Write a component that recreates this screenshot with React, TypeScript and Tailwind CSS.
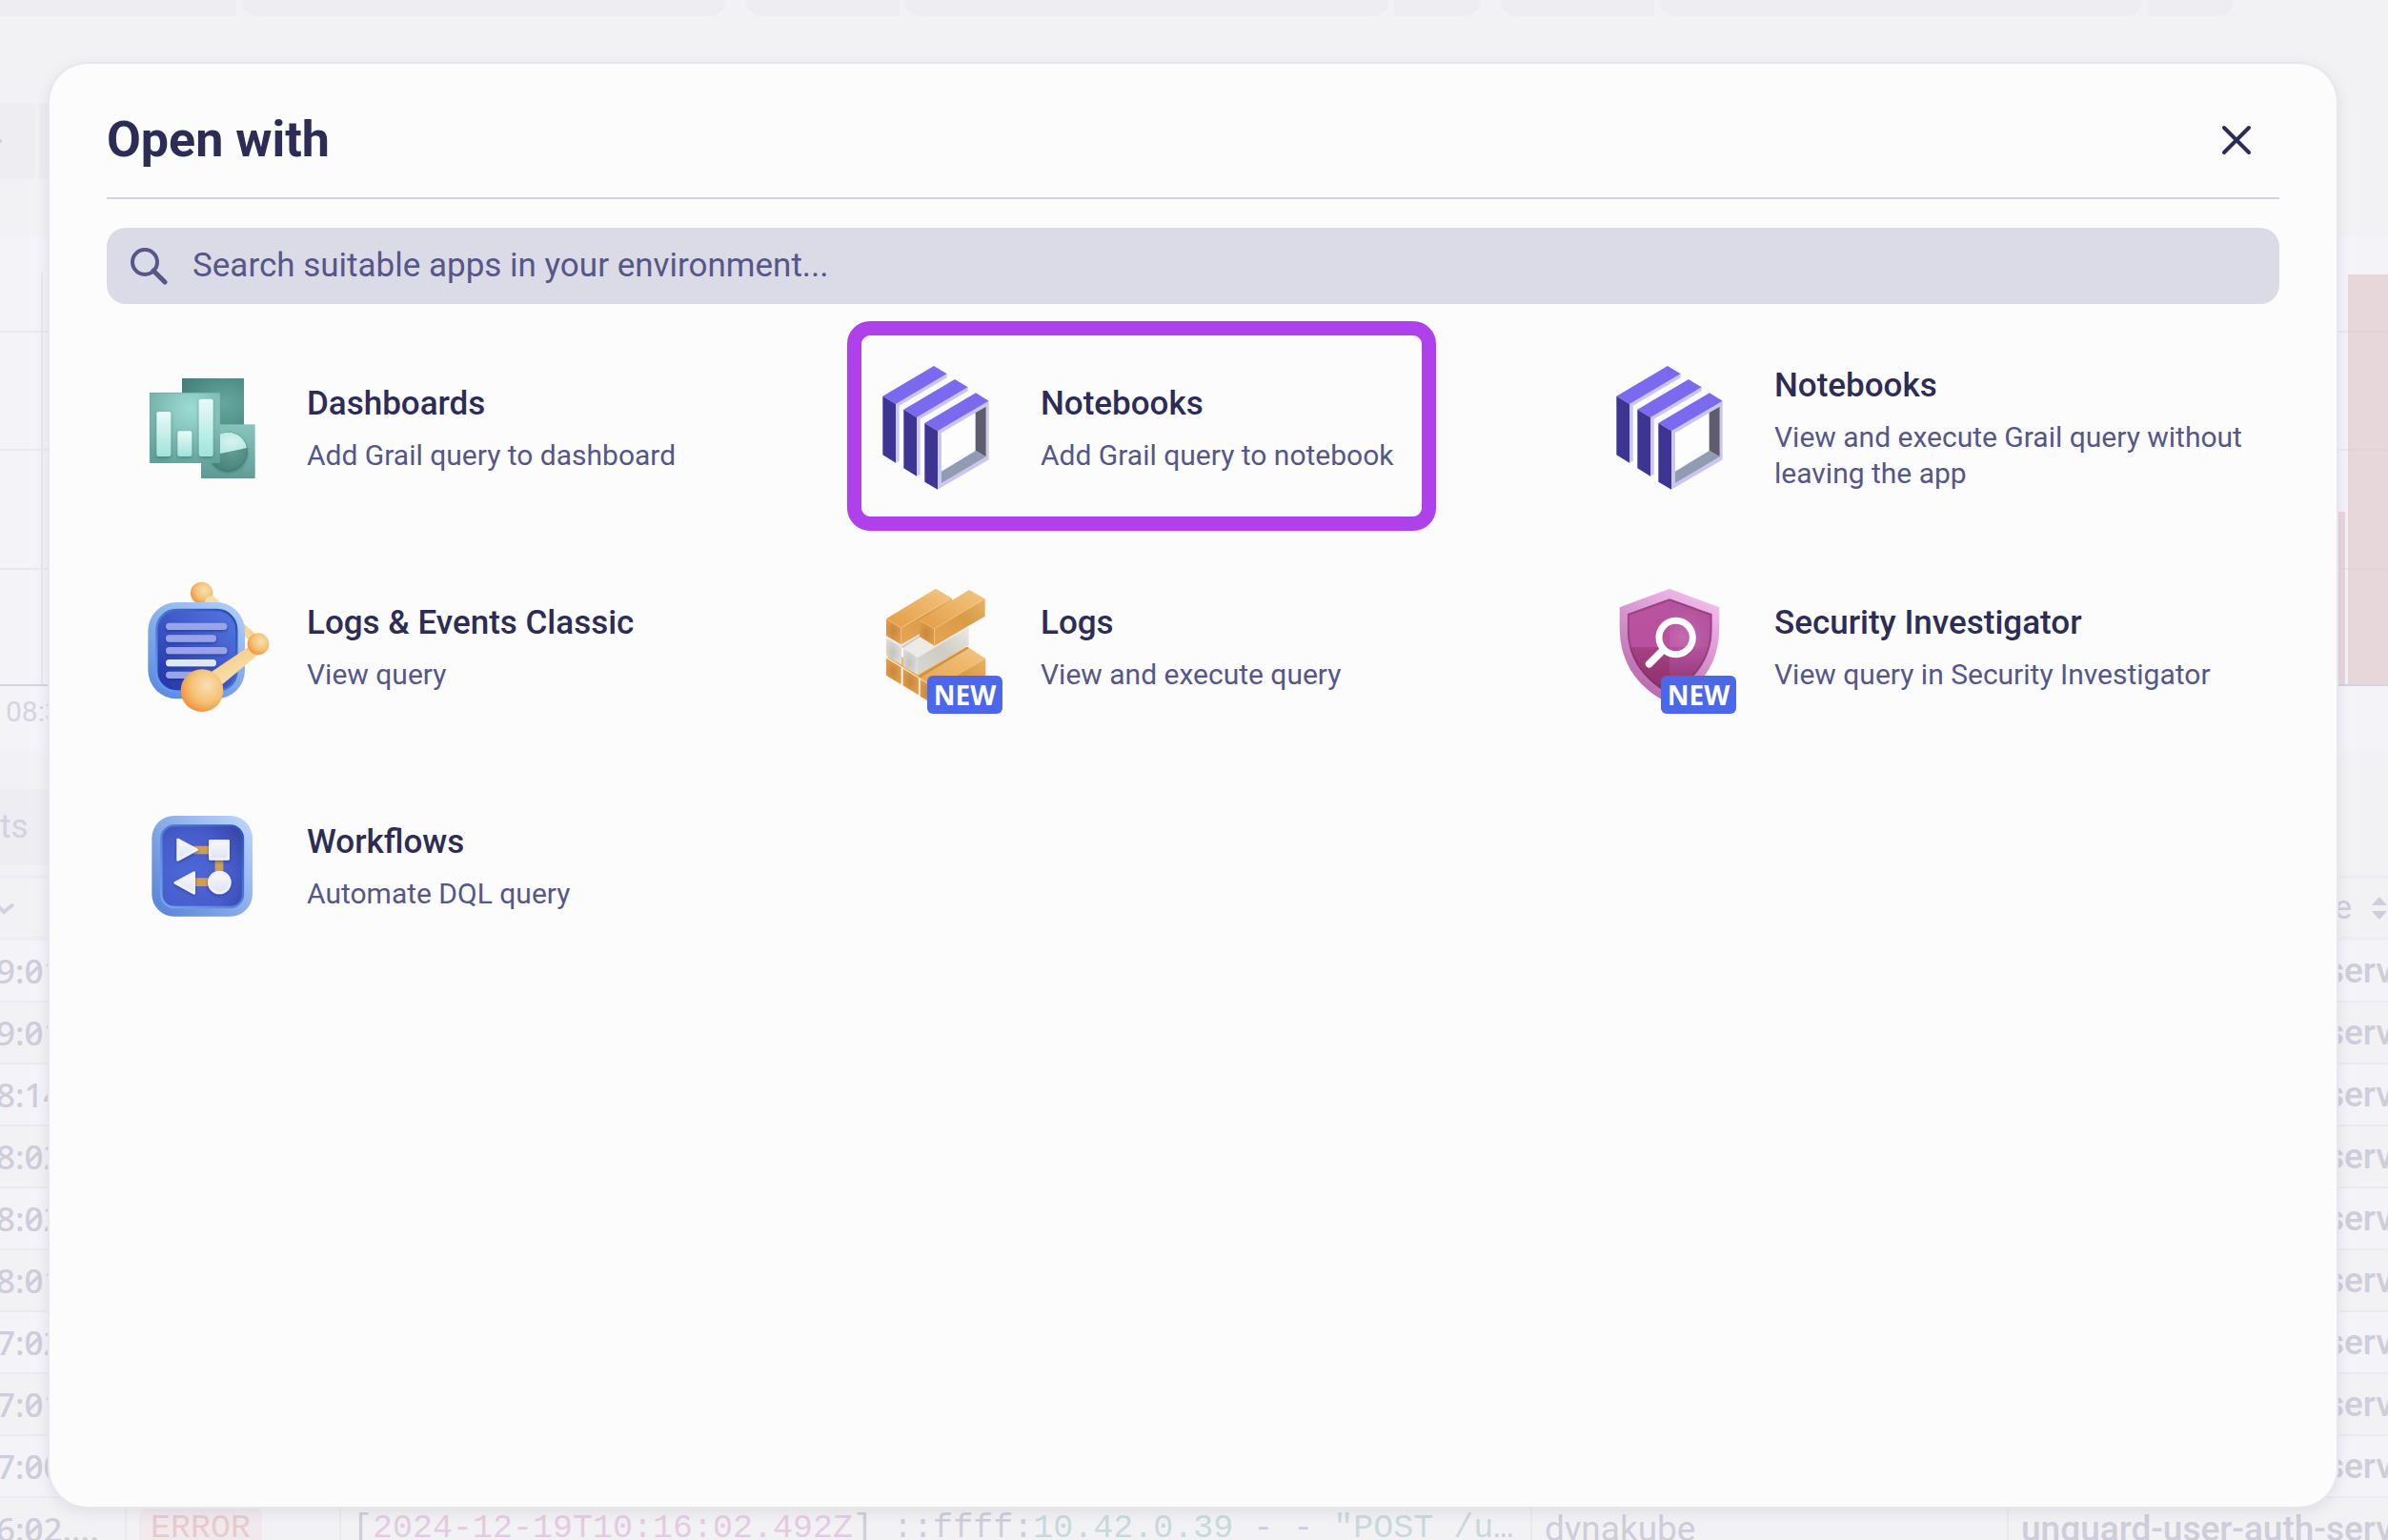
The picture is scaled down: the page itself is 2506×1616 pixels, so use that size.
import type { ReactNode } from 'react';

const times = ['9:01', '9:01', '8:14', '8:02', '8:02', '8:01', '7:02', '7:01', '7:00'];

function DashboardsIcon() {
  return (
    <svg viewBox="30 42 450 450" className="size-[150px]" aria-hidden="true">
      <defs>
        <radialGradient id="d-back" cx="0.7" cy="0.5" r="0.8">
          <stop offset="0" stopColor="#65a89e" />
          <stop offset="1" stopColor="#42807a" />
        </radialGradient>
        <linearGradient id="d-side" x1="0.6" y1="0" x2="0.5" y2="1">
          <stop offset="0" stopColor="#86c5bc" />
          <stop offset="1" stopColor="#5f9b94" />
        </linearGradient>
        <radialGradient id="d-front" cx="0.58" cy="0.22" r="0.85">
          <stop offset="0" stopColor="#9ddcd5" />
          <stop offset="0.65" stopColor="#78b5ad" />
          <stop offset="1" stopColor="#62a098" />
        </radialGradient>
        <linearGradient id="d-bar" x1="0" y1="0" x2="0" y2="1">
          <stop offset="0" stopColor="#e9fbf9" />
          <stop offset="1" stopColor="#a0e3dc" />
        </linearGradient>
        <radialGradient id="d-pie" cx="0.6" cy="0.45" r="0.6">
          <stop offset="0" stopColor="#619e97" />
          <stop offset="1" stopColor="#4a827b" />
        </radialGradient>
        <radialGradient id="d-slice" cx="0.6" cy="0.4" r="0.7">
          <stop offset="0" stopColor="#d6f4f0" />
          <stop offset="1" stopColor="#aee3dd" />
        </radialGradient>
        <filter id="d-shadow" x="-30%" y="-20%" width="160%" height="150%">
          <feDropShadow dx="0" dy="4" stdDeviation="5" floodColor="#1f5a54" floodOpacity="0.5" />
        </filter>
      </defs>
      <rect x="183" y="111" width="195" height="160" fill="url(#d-back)" />
      <rect x="243" y="256" width="170" height="170" fill="url(#d-side)" />
      <circle cx="328" cy="342" r="60" fill="url(#d-pie)" stroke="#3d726b" strokeWidth="2" filter="url(#d-shadow)" />
      <path d="M269 355A60 60 0 0 1 328 281A60 60 0 0 1 387 330Z" fill="url(#d-slice)" />
      <rect x="81" y="156" width="222" height="222" fill="url(#d-front)" />
      <path d="M82 377V157H302" fill="none" stroke="#6fa9a2" strokeWidth="2" />
      <g fill="url(#d-bar)" filter="url(#d-shadow)">
        <rect x="103" y="216" width="45" height="141" rx="7" />
        <rect x="169" y="277" width="45" height="80" rx="7" />
        <rect x="236" y="176" width="45" height="181" rx="7" />
      </g>
    </svg>
  );
}

function NotebooksIcon() {
  return (
    <svg viewBox="30 42 450 450" className="size-[150px]" aria-hidden="true">
      <path d="M120 192 281 97V109L131 197V371L120 377Z" fill="#cac6f2" />
      <path d="M79 167 240 72 281 97 120 192Z" fill="#7b69ef" />
      <path d="M79 167 120 192V377L79 352Z" fill="#3e3592" />
      <path d="M186 234 347 139V151L197 239V413L186 419Z" fill="#cac6f2" />
      <path d="M145 209 306 114 347 139 186 234Z" fill="#7b69ef" />
      <path d="M145 209 186 234V419L145 394Z" fill="#3e3592" />
      <path d="M252 277 413 182V367L252 461Z" fill="#c9c6ef" />
      <path d="M264 283 404 200V358L264 441Z" fill="#fdfdfd" />
      <path d="M371 219 404 200V358L371 339Z" fill="#5f5d6d" />
      <path d="M264 404 371 339 404 358 264 441Z" fill="#919bb2" />
      <path d="M211 252 372 157 413 182 252 277Z" fill="#7b69ef" />
      <path d="M211 252 252 277V461L211 437Z" fill="#3e3592" />
    </svg>
  );
}

function LogsClassicIcon() {
  return (
    <svg viewBox="30 42 450 450" className="size-[150px]" aria-hidden="true">
      <defs>
        <radialGradient id="c-ball" cx="0.62" cy="0.38" r="0.7">
          <stop offset="0" stopColor="#f8e0b4" />
          <stop offset="0.55" stopColor="#f5c274" />
          <stop offset="1" stopColor="#f08a38" />
        </radialGradient>
        <linearGradient id="c-rod" x1="0" y1="0" x2="0.6" y2="1">
          <stop offset="0" stopColor="#f2c36f" />
          <stop offset="1" stopColor="#fae6bd" />
        </linearGradient>
        <linearGradient id="c-frame" x1="0.8" y1="0" x2="0.2" y2="1">
          <stop offset="0" stopColor="#aecbf7" />
          <stop offset="1" stopColor="#5c8be0" />
        </linearGradient>
        <linearGradient id="c-screen" x1="0.9" y1="0.2" x2="0.1" y2="1">
          <stop offset="0" stopColor="#4f6ed9" />
          <stop offset="0.5" stopColor="#3d54c4" />
          <stop offset="1" stopColor="#2338a8" />
        </linearGradient>
        <linearGradient id="c-edge" x1="1" y1="0" x2="0" y2="1">
          <stop offset="0" stopColor="#1f4cb3" />
          <stop offset="1" stopColor="#6ba0f4" />
        </linearGradient>
        <filter id="c-shadow" x="-20%" y="-20%" width="140%" height="160%">
          <feDropShadow dx="0" dy="4" stdDeviation="4" floodColor="#16277f" floodOpacity="0.6" />
        </filter>
      </defs>
      <path d="M265 112 415 245" stroke="#f5d698" strokeWidth="28" />
      <circle cx="245" cy="97" r="35" fill="url(#c-ball)" />
      <path d="M255 124Q258 106 280 105L312 134H255Z" fill="#f7dda8" />
      <rect x="76" y="126" width="305" height="304" rx="90" fill="url(#c-frame)" />
      <rect x="103" y="150" width="252" height="256" rx="62" fill="url(#c-screen)" stroke="url(#c-edge)" strokeWidth="7" />
      <g fill="#99a4e8" filter="url(#c-shadow)">
        <rect x="132" y="191" width="193" height="22" rx="11" />
        <rect x="132" y="229" width="159" height="22" rx="11" />
        <rect x="132" y="267" width="193" height="22" rx="11" />
        <rect x="132" y="306" width="159" height="22" rx="11" fill="#dde7f8" />
        <rect x="132" y="344" width="120" height="22" rx="11" />
      </g>
      <path d="M268 350 396 264Q416 268 425 289L296 396Z" fill="url(#c-rod)" />
      <circle cx="423" cy="257" r="34" fill="url(#c-ball)" />
      <circle cx="246" cy="404" r="67" fill="url(#c-ball)" />
    </svg>
  );
}

function LogsIcon() {
  return (
    <svg viewBox="30 42 450 450" className="size-[150px]" aria-hidden="true">
      <defs>
        <linearGradient id="l-top" x1="0" y1="1" x2="1" y2="0">
          <stop offset="0" stopColor="#e29d43" />
          <stop offset="1" stopColor="#f4c682" />
        </linearGradient>
        <linearGradient id="l-side" x1="0" y1="1" x2="1" y2="0">
          <stop offset="0" stopColor="#e6a552" />
          <stop offset="0.6" stopColor="#d99b48" />
          <stop offset="1" stopColor="#e8b263" />
        </linearGradient>
        <radialGradient id="l-end" cx="0.45" cy="0.5" r="0.7">
          <stop offset="0" stopColor="#c6893f" />
          <stop offset="1" stopColor="#e7a04c" />
        </radialGradient>
        <radialGradient id="l-white-end" cx="0.4" cy="0.55" r="0.7">
          <stop offset="0" stopColor="#c4c2bf" />
          <stop offset="1" stopColor="#e3e2e0" />
        </radialGradient>
        <linearGradient id="l-white-side" x1="0" y1="1" x2="1" y2="0">
          <stop offset="0" stopColor="#dad7d0" />
          <stop offset="0.5" stopColor="#cfccc4" />
          <stop offset="1" stopColor="#eae9e6" />
        </linearGradient>
      </defs>
      <path d="M90 298 245 396 403 303 345 266 190 300Z" fill="url(#l-top)" />
      <path d="M192 358 345 266 351 270 197 363Z" fill="#cf8f3d" />
      <path d="M245 396 403 303V358L245 450Z" fill="url(#l-side)" />
      <g fill="url(#l-end)" stroke="#eeb56c" strokeWidth="1">
        <path d="M90 302 137 331V385L90 356Z" />
        <path d="M143 335 192 365V418L143 388Z" />
        <path d="M197 368 245 396V450L197 422Z" />
      </g>
      <path d="M90 236 240 150 348 205 190 299Z" fill="#edebe6" />
      <path d="M137 266 240 200 246 204 143 270Z" fill="#cfccc5" />
      <path d="M190 299 350 205V262L190 354Z" fill="url(#l-white-side)" />
      <g fill="url(#l-white-end)" stroke="#e9e8e6" strokeWidth="1">
        <path d="M90 238 138 267V322L90 293Z" />
        <path d="M144 271 190 299V354L144 327Z" />
      </g>
      <path d="M137 206 297 113V168L137 259Z" fill="url(#l-side)" />
      <path d="M90 178 246 83 297 113 137 206Z" fill="url(#l-top)" />
      <path d="M90 178 137 206V259L90 231Z" fill="url(#l-end)" />
      <path d="M90 178 137 206 297 113M137 206V259" fill="none" stroke="#f5c688" strokeWidth="2" />
      <path d="M242 209 401 115V170L242 263Z" fill="url(#l-side)" />
      <path d="M195 183 351 87 401 115 242 209Z" fill="url(#l-top)" />
      <path d="M195 183 242 209V263L195 234Z" fill="url(#l-end)" />
      <path d="M195 183 242 209 401 115M242 209V263" fill="none" stroke="#f5c688" strokeWidth="2" />
    </svg>
  );
}

function SecurityIcon() {
  return (
    <svg viewBox="30 42 450 450" className="size-[150px]" aria-hidden="true">
      <defs>
        <linearGradient id="s-frame" x1="0.8" y1="0" x2="0.3" y2="1">
          <stop offset="0" stopColor="#f3bfee" />
          <stop offset="1" stopColor="#b564a8" />
        </linearGradient>
        <linearGradient id="s-inner" x1="0" y1="0" x2="0" y2="1">
          <stop offset="0" stopColor="#b9529f" />
          <stop offset="0.5" stopColor="#b8529f" />
          <stop offset="1" stopColor="#85306b" />
        </linearGradient>
        <radialGradient id="s-glow" cx="0.3" cy="0.8" r="0.9">
          <stop offset="0" stopColor="#cc76b6" stopOpacity="0.7" />
          <stop offset="1" stopColor="#a24791" stopOpacity="0.3" />
        </radialGradient>
        <clipPath id="s-clip">
          <path d="M246 115 380 163V208C380 310 320 375 246 416C172 375 113 310 113 208V163Z" />
        </clipPath>
      </defs>
      <path d="M246 83 403 142V204C403 330 334 402 246 445C158 402 89 330 89 204V142Z" fill="url(#s-frame)" />
      <g clipPath="url(#s-clip)">
        <rect x="113" y="110" width="270" height="310" fill="url(#s-inner)" />
        <rect x="246" y="110" width="137" height="157" fill="url(#s-glow)" />
        <rect x="113" y="267" width="133" height="160" fill="#8c2a5e" fillOpacity="0.4" />
        <path d="M246 115 380 163V208C380 310 320 375 246 416C172 375 113 310 113 208V163Z" fill="none" stroke="#7c2c68" strokeOpacity="0.45" strokeWidth="12" />
      </g>
      <path d="M218 284 182 320" stroke="#fff" strokeWidth="23" strokeLinecap="round" />
      <circle cx="266" cy="237" r="53" fill="none" stroke="#fff" strokeWidth="21" />
    </svg>
  );
}

function WorkflowsIcon() {
  return (
    <svg viewBox="30 12 450 450" className="size-[150px]" aria-hidden="true">
      <defs>
        <linearGradient id="w-frame" x1="1" y1="0.1" x2="0.1" y2="0.9">
          <stop offset="0" stopColor="#bdd4fa" />
          <stop offset="0.5" stopColor="#8eaeea" />
          <stop offset="1" stopColor="#5e88da" />
        </linearGradient>
        <radialGradient id="w-screen" cx="0.35" cy="0.6" r="0.85">
          <stop offset="0" stopColor="#4d68d6" />
          <stop offset="0.6" stopColor="#465dca" />
          <stop offset="1" stopColor="#3442a2" />
        </radialGradient>
        <linearGradient id="w-edge" x1="1" y1="0" x2="0" y2="1">
          <stop offset="0" stopColor="#2456c0" />
          <stop offset="1" stopColor="#78a7f7" />
        </linearGradient>
        <linearGradient id="w-node" x1="0" y1="0" x2="0" y2="1">
          <stop offset="0" stopColor="#f8f9fd" />
          <stop offset="1" stopColor="#dde3f1" />
        </linearGradient>
        <filter id="w-shadow" x="-20%" y="-20%" width="150%" height="160%">
          <feDropShadow dx="0" dy="4" stdDeviation="5" floodColor="#1b2a80" floodOpacity="0.6" />
        </filter>
      </defs>
      <rect x="88" y="78" width="317" height="317" rx="70" fill="url(#w-frame)" />
      <rect x="118" y="109" width="257" height="257" rx="40" fill="url(#w-screen)" stroke="url(#w-edge)" strokeWidth="7" />
      <g stroke="#cf9f52" strokeWidth="26">
        <path d="M220 186H275M300 210V260M220 287H275" />
      </g>
      <g fill="url(#w-node)" stroke="#eef1f9" strokeWidth="8" strokeLinejoin="round" filter="url(#w-shadow)">
        <path d="M170 153 230 185 170 217Z" />
        <rect x="271" y="157" width="58" height="57" />
        <path d="M221 257V322L161 289Z" />
        <circle cx="301" cy="288" r="33" />
      </g>
    </svg>
  );
}

type AppTile = { name: string; text: string; icon: ReactNode; isNew?: boolean; highlighted?: boolean };

const apps: AppTile[] = [
  { name: 'Dashboards', text: 'Add Grail query to dashboard', icon: <DashboardsIcon /> },
  { name: 'Notebooks', text: 'Add Grail query to notebook', icon: <NotebooksIcon />, highlighted: true },
  { name: 'Notebooks', text: 'View and execute Grail query without leaving the app', icon: <NotebooksIcon /> },
  { name: 'Logs & Events Classic', text: 'View query', icon: <LogsClassicIcon /> },
  { name: 'Logs', text: 'View and execute query', icon: <LogsIcon />, isNew: true },
  { name: 'Security Investigator', text: 'View query in Security Investigator', icon: <SecurityIcon />, isNew: true },
  { name: 'Workflows', text: 'Automate DQL query', icon: <WorkflowsIcon /> },
];

function Tile({ app }: { app: AppTile }) {
  return (
    <li className="relative">
      <button type="button" className="flex h-[200px] w-full items-center gap-8 px-7 text-left">
        <span className="relative shrink-0">
          {app.icon}
          {app.isNew && (
            <span className="absolute top-[105px] left-[63px] flex h-10 w-[79px] items-center justify-center rounded-md bg-[#4b67ea] font-['Noto_Sans',sans-serif] text-[28px] leading-none font-bold text-white">
              NEW
            </span>
          )}
        </span>
        <span className="flex flex-col gap-3">
          <span className="text-[35px] leading-[46px] font-medium text-[#2c2c57]">{app.name}</span>
          <span className="text-[30px] leading-[38px] text-[#565688]">{app.text}</span>
        </span>
      </button>
      {app.highlighted && (
        <span className="pointer-events-none absolute -top-3 left-[7px] h-[220px] w-[618px] rounded-3xl border-[15px] border-[#ae41ea]" />
      )}
    </li>
  );
}

function Backdrop() {
  return (
    <div className="flex h-full flex-col bg-[#f2f2f4]">
      <div className="flex h-[17px] shrink-0 *:bg-[#eeedf2]">
        <div className="w-[248px]" />
        <div className="ml-[6px] w-[507px] rounded-b-2xl" />
        <div className="ml-[22px] w-[161px] rounded-bl-2xl" />
        <div className="ml-[6px] w-[507px] rounded-b-2xl" />
        <div className="ml-[6px] w-[90px] rounded-br-2xl" />
        <div className="ml-[22px] w-[161px] rounded-bl-2xl" />
        <div className="ml-[6px] w-[506px] rounded-b-2xl" />
        <div className="ml-[6px] w-[90px] rounded-br-2xl" />
      </div>
      <div className="mt-[91px] flex h-20 shrink-0 items-center gap-1">
        <div className="flex h-20 w-[37px] items-center bg-[#eeedf2]">
          <span className="h-1 w-[2px] rounded-r bg-[#d0cedb]" />
        </div>
        <div className="h-20 w-16 bg-[#eeedf2]" />
      </div>
      <div className="mt-[60px] h-[540px] shrink-0 bg-[#f3f3f8]">
        <div className="h-[472px] border-b-2 border-[#d4d3e1]">
          <svg className="h-[470px] w-full" aria-hidden="true">
            <path d="M0 100H2506M0 224H2506M0 349H2506" stroke="#eae9f0" strokeWidth="2" />
            <path d="M44 38V470" stroke="#e8e7ee" strokeWidth="2" />
            <rect x="2420" y="289" width="41" height="181" fill="#e8d7da" />
            <rect x="2464" y="40" width="42" height="430" fill="#e8d7da" />
            <path d="M2464 100H2506M2464 224H2506M2420 349H2461M2464 349H2506" stroke="#e3d2d7" strokeWidth="2" />
          </svg>
        </div>
        <p className="pt-[7px] pl-[6px] text-[30px] leading-10 text-[#d5d4e1] slashed-zero">08:3</p>
      </div>
      <div className="mt-10 flex h-20 w-64 shrink-0 items-center bg-[#eeedf2] text-[35px] text-[#d3d2de]">ts</div>
      <table className="mt-[10px] w-full shrink-0 table-fixed border-separate border-spacing-0 text-[37px] leading-none text-[#cfcdda]">
        <colgroup>
          <col className="w-[133px]" />
          <col className="w-[225px]" />
          <col className="w-[1250px]" />
          <col className="w-[500px]" />
          <col />
        </colgroup>
        <thead>
          <tr className="h-[69px] *:border-y-4 *:border-[#eeedf3] *:p-0 *:font-normal">
            <th>
              <svg width="16" height="16" viewBox="0 0 16 16" aria-hidden="true">
                <path d="M-6 2 4 12 14 4" fill="none" stroke="#d3d2de" strokeWidth="4" />
              </svg>
            </th>
            <th />
            <th />
            <th />
            <th>
              <span className="flex items-center justify-end gap-5 text-[35px]">
                e
                <svg width="18" height="24" viewBox="0 0 18 24" aria-hidden="true">
                  <path d="M9 0 17 9H1ZM9 24 17 15H1Z" fill="#cfcdda" />
                </svg>
              </span>
            </th>
          </tr>
        </thead>
        <tbody>
          {times.map((time, i) => (
            <tr key={i} className="h-[65px] whitespace-nowrap odd:bg-[#f3f3f8] *:border-b-2 *:border-[#ebeaf1] *:p-0">
              <td className="-indent-1 font-['Noto_Sans',sans-serif] text-[35px] font-medium slashed-zero">{time}</td>
              <td />
              <td />
              <td />
              <td className="pl-[13px]! font-medium">unguard-user-auth-serv</td>
            </tr>
          ))}
          <tr className="h-[65px] whitespace-nowrap *:border-[#eae9f0] *:p-0 *:not-last:border-r-2">
            <td className="-indent-1 font-['Noto_Sans',sans-serif] text-[35px] font-medium slashed-zero">6:02....</td>
            <td className="pl-[13px]!">
              <span className="inline-flex h-[50px] items-center rounded-xl bg-[#f1e9ec] px-3 font-['Liberation_Mono',monospace] text-[35px] text-[#e6cbcf]">
                ERROR
              </span>
            </td>
            <td className="pl-[12px]! font-['Liberation_Mono',monospace] text-[35px]">
              [<span className="text-[#e3cce2]">2024-12-19T10:16:02.492Z</span>] ::ffff:
              <span className="text-[#c9d9db]">10.42.0.39</span> - - <span className="text-[#c9d9db]">"POST /u</span>…
            </td>
            <td className="pl-[13px]!">dynakube</td>
            <td className="pl-[13px]! font-medium">unguard-user-auth-serv</td>
          </tr>
        </tbody>
      </table>
    </div>
  );
}

export default function App() {
  return (
    <div className="relative flex h-screen flex-col overflow-hidden font-['Roboto',sans-serif]">
      <div className="absolute inset-0 overflow-hidden" aria-hidden="true">
        <Backdrop />
      </div>
      <main
        role="dialog"
        aria-labelledby="dialog-title"
        className="relative mt-[67px] mr-[54px] mb-[35px] ml-[52px] grow rounded-[40px] bg-[#fcfcfc] px-15 shadow-[0_0_0_2px_#e8e7ed,0_4px_16px_rgba(80,75,120,0.14)]"
      >
        <header className="flex h-[142px] items-center justify-between border-b-2 border-[#d2d1e2] pt-5 pr-[15px]">
          <h1 id="dialog-title" className="text-[52px] leading-[60px] font-bold text-[#2c2c57]">Open with</h1>
          <button type="button" aria-label="Close" className="flex size-15 items-center justify-center">
            <svg width="32" height="32" viewBox="0 0 32 32" aria-hidden="true">
              <path d="M3 3 29 29M29 3 3 29" stroke="#2c2c57" strokeWidth="4" strokeLinecap="round" />
            </svg>
          </button>
        </header>
        <label className="mt-[30px] flex h-20 items-center gap-[26px] rounded-[20px] bg-[#dbdbe7] px-6">
          <svg width="40" height="40" viewBox="0 0 40 40" className="shrink-0" aria-hidden="true">
            <circle cx="16" cy="16" r="13" fill="none" stroke="#565688" strokeWidth="4" />
            <path d="M25 25 37 37" stroke="#565688" strokeWidth="5" strokeLinecap="round" />
          </svg>
          <input
            type="text"
            aria-label="Search apps"
            placeholder="Search suitable apps in your environment..."
            className="w-full bg-transparent text-[35px] text-[#565688] outline-none placeholder:text-[#565688]"
          />
        </label>
        <ul className="mt-[30px] grid grid-cols-3 gap-[30px]">
          {apps.map((app, i) => (
            <Tile key={i} app={app} />
          ))}
        </ul>
      </main>
    </div>
  );
}
